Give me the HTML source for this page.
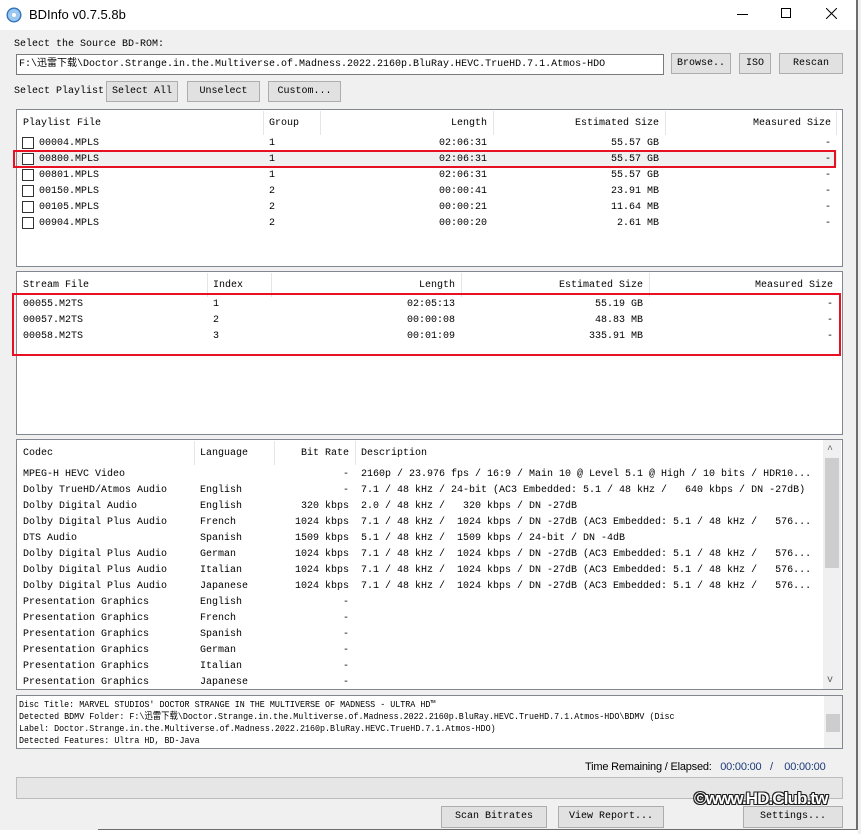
<!DOCTYPE html>
<html><head><meta charset="utf-8"><style>
*{margin:0;padding:0;box-sizing:border-box}
body{width:861px;height:834px;background:#fff;position:relative;overflow:hidden;font-family:"Liberation Mono","Noto Sans CJK SC",monospace;font-size:10px;color:#000}
.a{position:absolute}
.t{position:absolute;white-space:pre;line-height:12px;font-size:10px;margin-top:1px}
.r{position:absolute;white-space:pre;line-height:12px;font-size:10px;text-align:right;margin-top:1px}
.btn{position:absolute;background:#e1e1e1;border:1px solid #adadad;text-align:center;line-height:19px;font-size:10px;white-space:pre}
.box{position:absolute;background:#fff;border:1px solid #828790}
.dv{position:absolute;width:1px;background:#e5e5e5}
.cb{position:absolute;width:12px;height:12px;border:1px solid #333;background:#fff}
.red{position:absolute;border:2px solid #e81123}
.sb{position:absolute;background:#f0f0f0}
</style></head><body>
<div class="a" style="left:0;top:0;width:856px;height:30px;background:#fff"></div>
<svg class="a" style="left:6px;top:7px" width="16" height="16"><circle cx="8" cy="8" r="7" fill="#4a90d9"/><circle cx="8" cy="8" r="6" fill="#9cc8f0"/><circle cx="8" cy="8" r="2" fill="#fff"/><circle cx="8" cy="8" r="7" fill="none" stroke="#2a6ab0" stroke-width="1"/></svg>
<div class="a" style="left:29px;top:7px;font:13px/16px 'Liberation Sans',sans-serif">BDInfo v0.7.5.8b</div>
<div class="a" style="left:737px;top:14px;width:11px;height:1px;background:#000"></div>
<div class="a" style="left:781px;top:8px;width:10px;height:10px;border:1px solid #000"></div>
<svg class="a" style="left:826px;top:8px" width="11" height="11"><path d="M0 0L11 11M11 0L0 11" stroke="#000" stroke-width="1"/></svg>
<div class="a" style="left:0;top:30px;width:856px;height:800px;background:#f0f0f0"></div>
<div class="a" style="left:856px;top:0;width:2px;height:830px;background:#6d6d6d"></div>
<div class="a" style="left:858px;top:0;width:3px;height:834px;background:#f0f0f0"></div>
<div class="a" style="left:0;top:830px;width:858px;height:4px;background:#fff"></div>
<div class="a" style="left:98px;top:829px;width:760px;height:1px;background:#6d6d6d"></div>

<div class="t" style="left:14px;top:38px">Select the Source BD-ROM:</div>
<div class="box" style="left:16px;top:54px;width:648px;height:21px;border-color:#7a7a7a"></div>
<div class="t" style="left:19px;top:58px">F:\迅雷下载\Doctor.Strange.in.the.Multiverse.of.Madness.2022.2160p.BluRay.HEVC.TrueHD.7.1.Atmos-HDO</div>
<div class="btn" style="left:671px;top:53px;width:60px;height:21px">Browse..</div>
<div class="btn" style="left:739px;top:53px;width:32px;height:21px">ISO</div>
<div class="btn" style="left:779px;top:53px;width:64px;height:21px;line-height:20px">Rescan</div>

<div class="t" style="left:14px;top:85px">Select Playlist</div>
<div class="btn" style="left:106px;top:81px;width:72px;height:21px">Select All</div>
<div class="btn" style="left:187px;top:81px;width:73px;height:21px">Unselect</div>
<div class="btn" style="left:268px;top:81px;width:73px;height:21px">Custom...</div>

<div class="box" style="left:16px;top:109px;width:827px;height:158px"></div>
<div class="dv" style="left:263px;top:111px;height:24px"></div>
<div class="dv" style="left:320px;top:111px;height:24px"></div>
<div class="dv" style="left:493px;top:111px;height:24px"></div>
<div class="dv" style="left:665px;top:111px;height:24px"></div>
<div class="dv" style="left:836px;top:111px;height:24px"></div>
<div class="t" style="left:23px;top:117px">Playlist File</div>
<div class="t" style="left:269px;top:117px">Group</div>
<div class="r" style="right:374px;top:117px">Length</div>
<div class="r" style="right:202px;top:117px">Estimated Size</div>
<div class="r" style="right:30px;top:117px">Measured Size</div>
<div class="a" style="left:17px;top:151px;width:820px;height:15px;background:#f0f0f0"></div>
<div class="cb" style="left:22px;top:137px"></div><div class="t" style="left:39px;top:137px">00004.MPLS</div><div class="t" style="left:269px;top:137px">1</div><div class="r" style="right:374px;top:137px">02:06:31</div><div class="r" style="right:202px;top:137px">55.57 GB</div><div class="r" style="right:30px;top:137px">-</div>
<div class="cb" style="left:22px;top:153px"></div><div class="t" style="left:39px;top:153px">00800.MPLS</div><div class="t" style="left:269px;top:153px">1</div><div class="r" style="right:374px;top:153px">02:06:31</div><div class="r" style="right:202px;top:153px">55.57 GB</div><div class="r" style="right:30px;top:153px">-</div>
<div class="cb" style="left:22px;top:169px"></div><div class="t" style="left:39px;top:169px">00801.MPLS</div><div class="t" style="left:269px;top:169px">1</div><div class="r" style="right:374px;top:169px">02:06:31</div><div class="r" style="right:202px;top:169px">55.57 GB</div><div class="r" style="right:30px;top:169px">-</div>
<div class="cb" style="left:22px;top:185px"></div><div class="t" style="left:39px;top:185px">00150.MPLS</div><div class="t" style="left:269px;top:185px">2</div><div class="r" style="right:374px;top:185px">00:00:41</div><div class="r" style="right:202px;top:185px">23.91 MB</div><div class="r" style="right:30px;top:185px">-</div>
<div class="cb" style="left:22px;top:201px"></div><div class="t" style="left:39px;top:201px">00105.MPLS</div><div class="t" style="left:269px;top:201px">2</div><div class="r" style="right:374px;top:201px">00:00:21</div><div class="r" style="right:202px;top:201px">11.64 MB</div><div class="r" style="right:30px;top:201px">-</div>
<div class="cb" style="left:22px;top:217px"></div><div class="t" style="left:39px;top:217px">00904.MPLS</div><div class="t" style="left:269px;top:217px">2</div><div class="r" style="right:374px;top:217px">00:00:20</div><div class="r" style="right:202px;top:217px">2.61 MB</div><div class="r" style="right:30px;top:217px">-</div>
<div class="red" style="left:13px;top:150px;width:823px;height:18px"></div>

<div class="box" style="left:16px;top:271px;width:827px;height:164px"></div>
<div class="dv" style="left:207px;top:273px;height:24px"></div>
<div class="dv" style="left:271px;top:273px;height:24px"></div>
<div class="dv" style="left:461px;top:273px;height:24px"></div>
<div class="dv" style="left:649px;top:273px;height:24px"></div>
<div class="t" style="left:23px;top:279px">Stream File</div>
<div class="t" style="left:213px;top:279px">Index</div>
<div class="r" style="right:406px;top:279px">Length</div>
<div class="r" style="right:218px;top:279px">Estimated Size</div>
<div class="r" style="right:28px;top:279px">Measured Size</div>
<div class="t" style="left:23px;top:298px">00055.M2TS</div><div class="t" style="left:213px;top:298px">1</div><div class="r" style="right:406px;top:298px">02:05:13</div><div class="r" style="right:218px;top:298px">55.19 GB</div><div class="r" style="right:28px;top:298px">-</div>
<div class="t" style="left:23px;top:314px">00057.M2TS</div><div class="t" style="left:213px;top:314px">2</div><div class="r" style="right:406px;top:314px">00:00:08</div><div class="r" style="right:218px;top:314px">48.83 MB</div><div class="r" style="right:28px;top:314px">-</div>
<div class="t" style="left:23px;top:330px">00058.M2TS</div><div class="t" style="left:213px;top:330px">3</div><div class="r" style="right:406px;top:330px">00:01:09</div><div class="r" style="right:218px;top:330px">335.91 MB</div><div class="r" style="right:28px;top:330px">-</div>
<div class="red" style="left:12px;top:293px;width:829px;height:63px"></div>

<div class="box" style="left:16px;top:439px;width:827px;height:251px"></div>
<div class="dv" style="left:194px;top:441px;height:24px"></div>
<div class="dv" style="left:274px;top:441px;height:24px"></div>
<div class="dv" style="left:355px;top:441px;height:24px"></div>
<div class="sb" style="left:823px;top:440px;width:18px;height:249px"></div>
<div class="a" style="left:825px;top:458px;width:14px;height:110px;background:#cdcdcd"></div>
<div class="t" style="left:827px;top:444px;color:#606060">^</div>
<div class="t" style="left:827px;top:674px;color:#606060">v</div>
<div class="t" style="left:23px;top:447px">Codec</div><div class="t" style="left:200px;top:447px">Language</div><div class="r" style="right:512px;top:447px">Bit Rate</div><div class="t" style="left:361px;top:447px">Description</div>
<div class="t" style="left:23px;top:466px;line-height:16px">MPEG-H HEVC Video
Dolby TrueHD/Atmos Audio
Dolby Digital Audio
Dolby Digital Plus Audio
DTS Audio
Dolby Digital Plus Audio
Dolby Digital Plus Audio
Dolby Digital Plus Audio
Presentation Graphics
Presentation Graphics
Presentation Graphics
Presentation Graphics
Presentation Graphics
Presentation Graphics</div>
<div class="t" style="left:200px;top:466px;line-height:16px">
English
English
French
Spanish
German
Italian
Japanese
English
French
Spanish
German
Italian
Japanese</div>
<div class="r" style="right:512px;top:466px;line-height:16px">-
-
320 kbps
1024 kbps
1509 kbps
1024 kbps
1024 kbps
1024 kbps
-
-
-
-
-
-</div>
<div class="t" style="left:361px;top:466px;line-height:16px">2160p / 23.976 fps / 16:9 / Main 10 @ Level 5.1 @ High / 10 bits / HDR10...
7.1 / 48 kHz / 24-bit (AC3 Embedded: 5.1 / 48 kHz /   640 kbps / DN -27dB)
2.0 / 48 kHz /   320 kbps / DN -27dB
7.1 / 48 kHz /  1024 kbps / DN -27dB (AC3 Embedded: 5.1 / 48 kHz /   576...
5.1 / 48 kHz /  1509 kbps / 24-bit / DN -4dB
7.1 / 48 kHz /  1024 kbps / DN -27dB (AC3 Embedded: 5.1 / 48 kHz /   576...
7.1 / 48 kHz /  1024 kbps / DN -27dB (AC3 Embedded: 5.1 / 48 kHz /   576...
7.1 / 48 kHz /  1024 kbps / DN -27dB (AC3 Embedded: 5.1 / 48 kHz /   576...</div>

<div class="box" style="left:16px;top:695px;width:827px;height:54px;overflow:hidden">
<div class="t" style="left:2px;top:2px;font-size:9.5px;transform:scaleX(0.88);transform-origin:0 0">Disc Title: MARVEL STUDIOS' DOCTOR STRANGE IN THE MULTIVERSE OF MADNESS - ULTRA HD™
Detected BDMV Folder: F:\迅雷下载\Doctor.Strange.in.the.Multiverse.of.Madness.2022.2160p.BluRay.HEVC.TrueHD.7.1.Atmos-HDO\BDMV (Disc
Label: Doctor.Strange.in.the.Multiverse.of.Madness.2022.2160p.BluRay.HEVC.TrueHD.7.1.Atmos-HDO)
Detected Features: Ultra HD, BD-Java
Disc Size: 60,604,578,308 bytes (56.46 GB)</div>
<div class="sb" style="left:807px;top:0;width:18px;height:52px"></div>
<div class="a" style="left:809px;top:18px;width:14px;height:18px;background:#cdcdcd"></div>
</div>

<div class="a" style="left:585px;top:760px;font:11px/14px 'Liberation Sans',sans-serif;letter-spacing:-0.2px;white-space:pre">Time Remaining / Elapsed:   <span style="color:#1c3a78">00:00:00   /    00:00:00</span></div>
<div class="a" style="left:16px;top:777px;width:827px;height:22px;background:#e6e6e6;border:1px solid #bcbcbc"></div>

<div class="btn" style="left:441px;top:806px;width:106px;height:22px;line-height:20px">Scan Bitrates</div>
<div class="btn" style="left:558px;top:806px;width:106px;height:22px;line-height:20px">View Report...</div>
<div class="btn" style="left:743px;top:806px;width:100px;height:22px;line-height:20px">Settings...</div>
<div class="a" style="left:694px;top:789px;font:bold 17px/19px 'Liberation Sans',sans-serif;color:#fff;letter-spacing:-0.9px;text-shadow:1px 1px 0 #222,-1px -1px 0 #222,1px -1px 0 #222,-1px 1px 0 #222,0 1px 0 #222,1px 0 0 #222,0 -1px 0 #222,-1px 0 0 #222">©www.HD.Club.tw</div>
</body></html>
